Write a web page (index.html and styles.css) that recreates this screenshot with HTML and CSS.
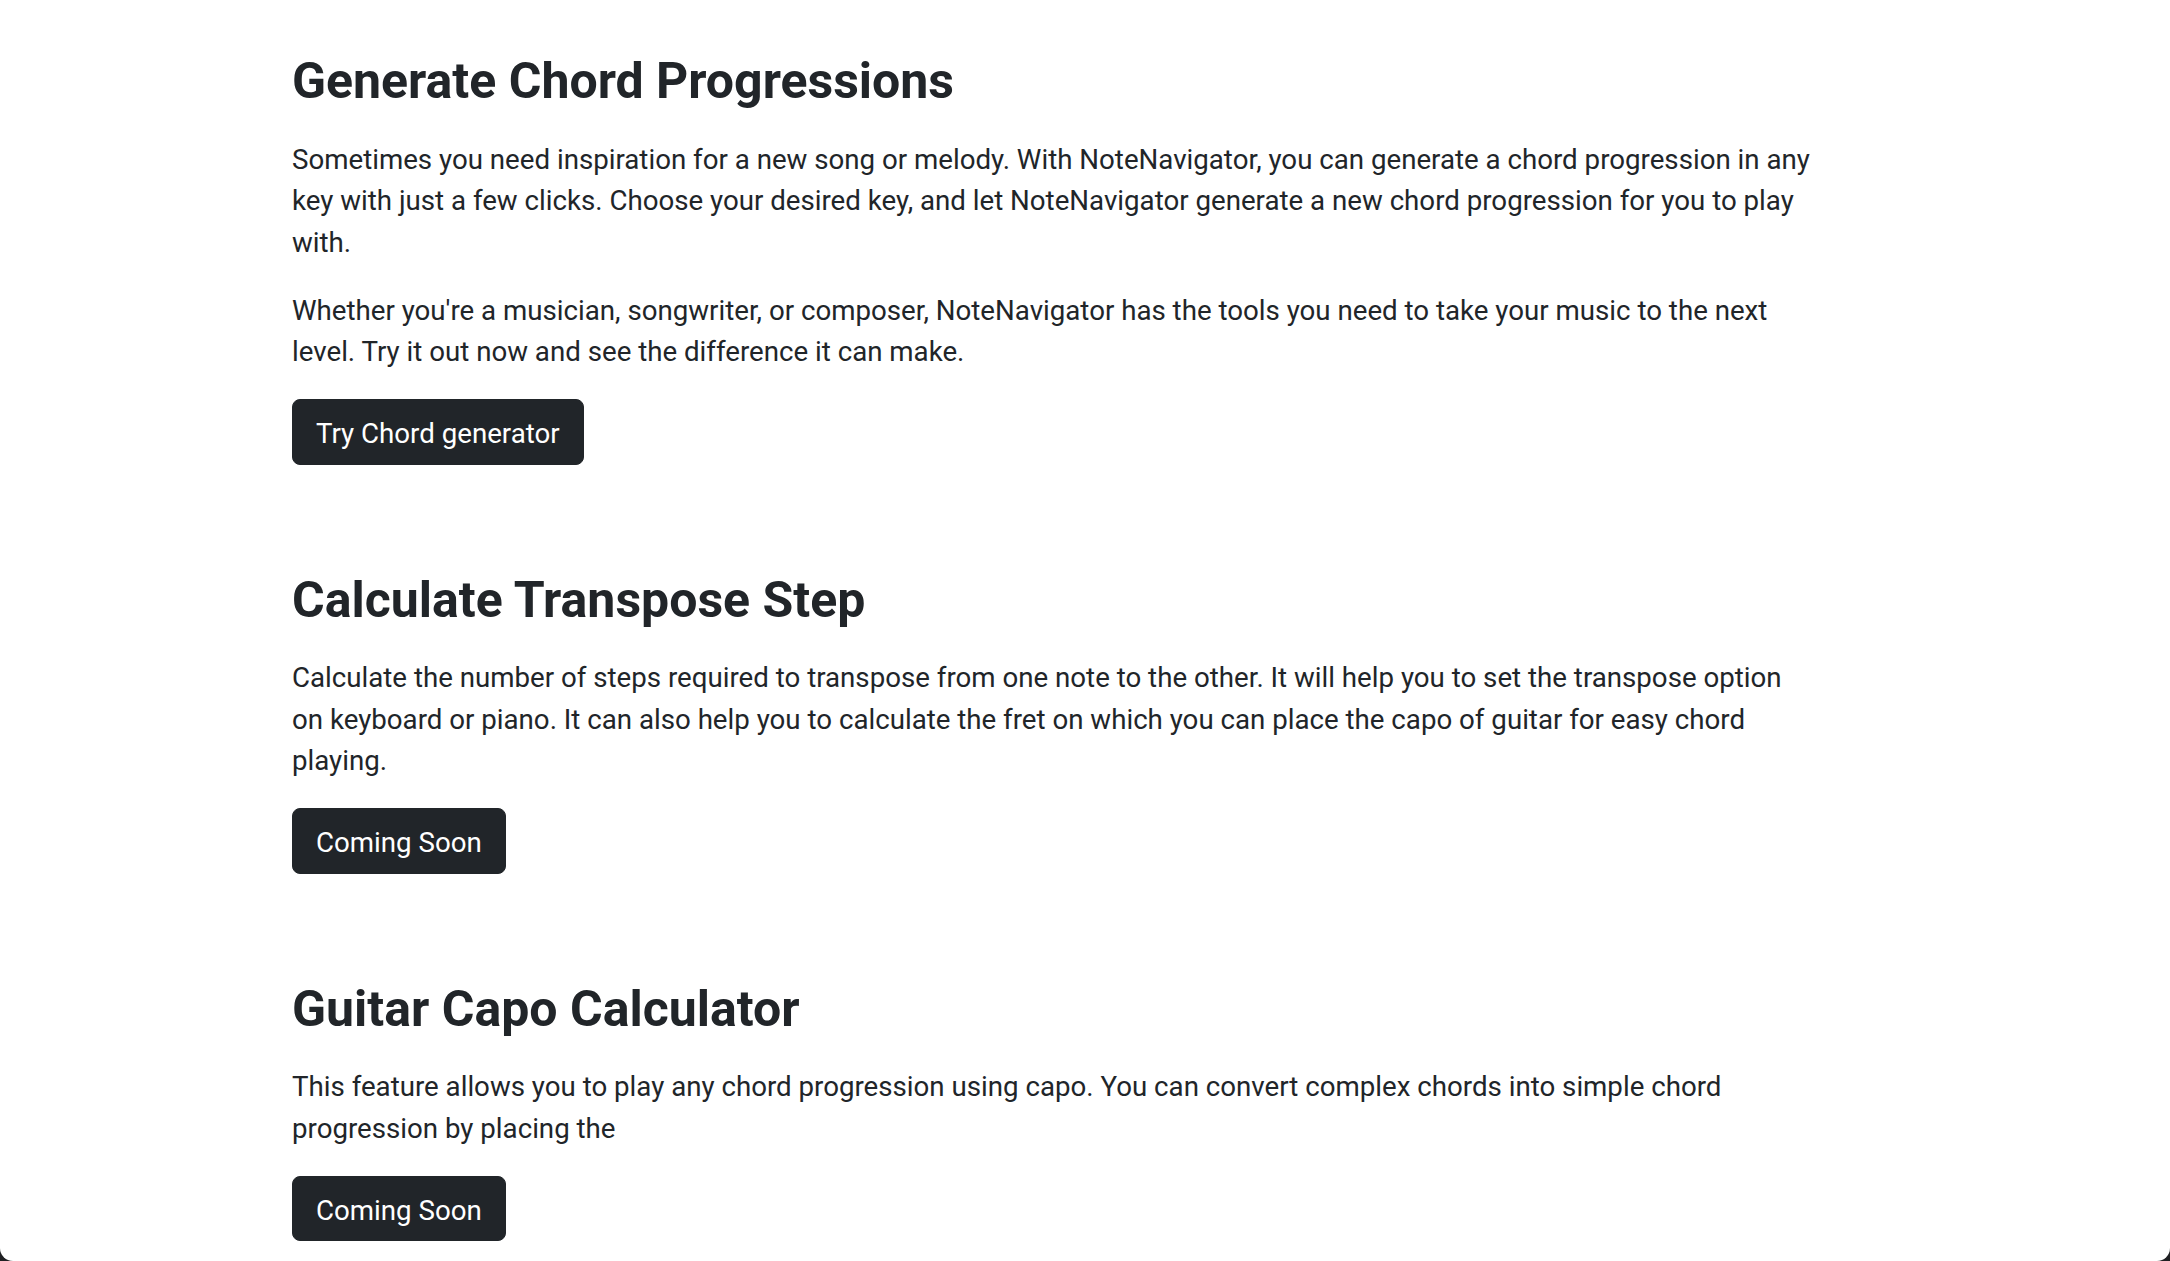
FILE: index.html
```html
<!DOCTYPE html>
<html lang="en">
<head>
<meta charset="utf-8">
<title>NoteNavigator – Tools</title>
<link rel="stylesheet" href="styles.css">
</head>
<body>
<main class="page">
  <section class="feature">
    <h2 class="feature-title">Generate Chord Progressions</h2>
    <p class="feature-text">Sometimes you need inspiration for a new song or melody. With NoteNavigator, you can generate a chord progression in any key with just a few clicks. Choose your desired key, and let NoteNavigator generate a new chord progression for you to play with.</p>
    <p class="feature-text">Whether you're a musician, songwriter, or composer, NoteNavigator has the tools you need to take your music to the next level. Try it out now and see the difference it can make.</p>
    <a class="btn-dark" href="#">Try Chord generator</a>
  </section>
  <section class="feature">
    <h2 class="feature-title">Calculate Transpose Step</h2>
    <p class="feature-text">Calculate the number of steps required to transpose from one note to the other. It will help you to set the transpose option on keyboard or piano. It can also help you to calculate the fret on which you can place the capo of guitar for easy chord playing.</p>
    <a class="btn-dark" href="#">Coming Soon</a>
  </section>
  <section class="feature">
    <h2 class="feature-title">Guitar Capo Calculator</h2>
    <p class="feature-text">This feature allows you to play any chord progression using capo. You can convert complex chords into simple chord progression by placing the</p>
    <a class="btn-dark" href="#">Coming Soon</a>
  </section>
</main>
</body>
</html>
```
FILE: styles.css
```css
html {
  margin: 0;
  background: #1f2023;
}

body {
  margin: 0;
  height: 100vh;
  overflow: hidden;
  background: #ffffff;
  border-radius: 0 0 13px 13px;
  color: #212529;
  font-family: Roboto, "Liberation Sans", Arial, sans-serif;
}

.page {
  box-sizing: border-box;
  width: 1814px;
  padding: 51px 0 0 292px;
}

.feature {
  width: 1522px;
  display: flex;
  flex-direction: column;
  align-items: flex-start;
  margin-bottom: 105px;
}

.feature:last-child {
  margin-bottom: 0;
}

.feature-title {
  margin: 0 0 27.5px;
  font-size: 50px;
  line-height: 60px;
  font-weight: 700;
  color: #212529;
}

.feature-text {
  margin: 0 0 26.5px;
  font-size: 27.68px;
  line-height: 41.5px;
  font-weight: 400;
}

.btn-dark {
  display: inline-block;
  padding: 13px 23px 9px;
  font-size: 27.68px;
  line-height: 41.5px;
  color: #ffffff;
  background: #212529;
  border: 1px solid #212529;
  border-radius: 8px;
  text-decoration: none;
}
```
